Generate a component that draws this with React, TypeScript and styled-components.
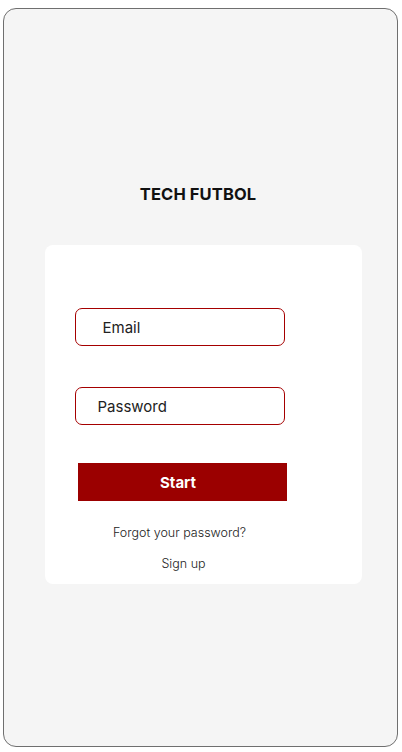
import styled, { createGlobalStyle } from "styled-components";

const GlobalStyle = createGlobalStyle`
  html, body {
    margin: 0;
    padding: 0;
    background: #ffffff;
    font-family: Inter, "Liberation Sans", sans-serif;
  }
  * {
    box-sizing: border-box;
  }
`;

const App = () => {
  return (
    <>
      <GlobalStyle />
      <Frame>
        <Title>TECH FUTBOL</Title>
        <Card>
          <Field $padLeft={27}>
            <input placeholder="Email" />
          </Field>
          <Field $padLeft={22} $top={41}>
            <input type="password" placeholder="Password" />
          </Field>
          <StartButton>Start</StartButton>
          <LinkText $top={24}>Forgot your password?</LinkText>
          <LinkText $top={15} $nudge={8}>
            Sign up
          </LinkText>
        </Card>
      </Frame>
    </>
  );
};

export default App;

const Frame = styled.div`
  margin: 8px 0 0 3px;
  width: 395px;
  height: 739px;
  background: #f5f5f5;
  border: 1.5px solid #6f6f6f;
  border-radius: 13px;
  display: flex;
  flex-direction: column;
  align-items: flex-start;
  padding-top: 175px;
`;

const Title = styled.h1`
  margin: 0;
  width: 100%;
  padding-right: 5px;
  text-align: center;
  font-size: 16.5px;
  line-height: 20px;
  font-weight: 700;
  color: #111;
  letter-spacing: 0.1px;
`;

const Card = styled.div`
  margin: 41px 0 0 40.5px;
  width: 317px;
  height: 339px;
  background: #ffffff;
  border-radius: 8px;
  display: flex;
  flex-direction: column;
  padding: 63px 0 0 30px;
`;

const Field = styled.label<{ $padLeft: number; $top?: number }>`
  display: flex;
  align-items: center;
  width: 210px;
  height: 38px;
  margin-top: ${(p) => p.$top ?? 0}px;
  border: 1.3px solid #a50000;
  border-radius: 7px;
  padding-left: ${(p) => p.$padLeft}px;

  input {
    border: none;
    outline: none;
    background: transparent;
    width: 100%;
    font-family: Inter, "Liberation Sans", sans-serif;
    font-size: 15px;
    color: #222;
    padding: 0;
  }
  input::placeholder {
    color: #222;
    opacity: 1;
  }
`;

const StartButton = styled.button`
  margin: 38px 0 0 3px;
  width: 209px;
  height: 38px;
  border: none;
  border-radius: 0;
  background: #9b0000;
  color: #ffffff;
  font-family: Inter, "Liberation Sans", sans-serif;
  font-size: 15px;
  font-weight: 700;
  padding: 0 8px 0 0;
  cursor: pointer;
`;

const LinkText = styled.a<{ $top: number; $nudge?: number }>`
  display: block;
  width: 210px;
  margin-top: ${(p) => p.$top}px;
  padding-left: ${(p) => p.$nudge ?? 0}px;
  text-align: center;
  font-size: 12.5px;
  font-weight: 300;
  line-height: 16px;
  color: #222;
  cursor: pointer;
`;
